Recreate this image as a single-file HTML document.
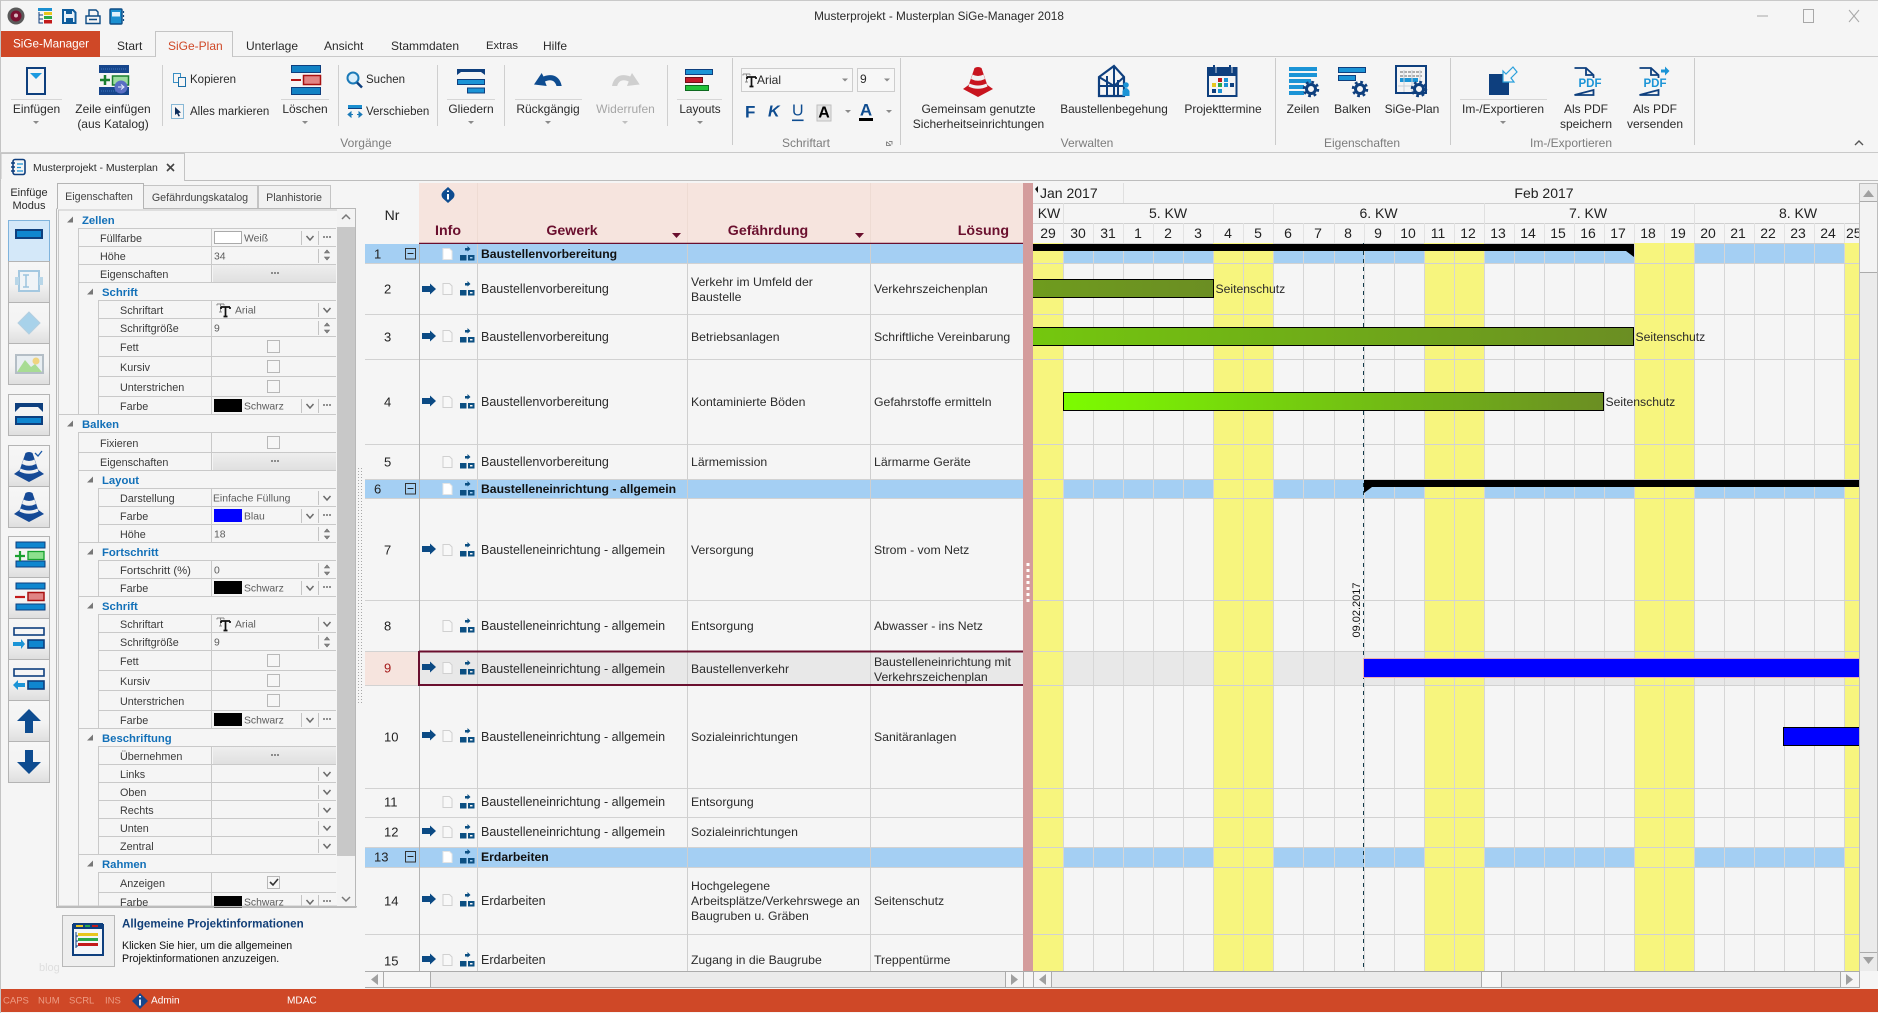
<!DOCTYPE html>
<html lang="de"><head><meta charset="utf-8"><title>Musterprojekt - Musterplan SiGe-Manager 2018</title>
<style>
html,body{margin:0;padding:0;background:#f5f5f5;width:1878px;height:1013px;overflow:hidden}
svg{display:block;position:absolute;left:0;top:0}
text{font-family:"Liberation Sans",sans-serif;font-size:12px;fill:#2a2a2a;dominant-baseline:central}
.c{text-anchor:middle}
.gl{fill:#7c7c7c}
.tb{font-size:12.25px;fill:#2b2b2b}
.t2{font-size:12.5px;fill:#2b2b2b}
.gb{font-size:12.2px;font-weight:bold;fill:#111}
.nr{font-size:13px;fill:#222}
.hd{font-size:14.2px;font-weight:bold;fill:#6a0f2e}
.gh{font-size:14px;fill:#222}
.pg{font-size:10.8px;fill:#3a3a3a;transform:translateY(1px)}
.cat{font-size:11.3px;font-weight:bold;fill:#1270b8;transform:translateY(1px)}
.sx{font-size:10.4px;fill:#5c5c5c;transform:translateY(1px)}
.tl{font-size:10.7px;fill:#444}
.rs{font-size:11.5px}
.st{font-size:9.5px;fill:#ec9c84}
.sw{font-size:10.1px;fill:#fff}
</style></head><body>
<svg width="1878" height="1013" viewBox="0 0 1878 1013" xmlns="http://www.w3.org/2000/svg">
<defs>
<linearGradient id="g2"><stop offset="0" stop-color="#6f9c1e"/><stop offset="1" stop-color="#6b8e23"/></linearGradient>
<linearGradient id="g3"><stop offset="0" stop-color="#74c80e"/><stop offset="1" stop-color="#6b8e23"/></linearGradient>
<linearGradient id="g4"><stop offset="0" stop-color="#7cfc00"/><stop offset="1" stop-color="#6b8e23"/></linearGradient>
<linearGradient id="bt" x1="0" y1="0" x2="0" y2="1"><stop offset="0" stop-color="#f6f6f6"/><stop offset=".55" stop-color="#f3f3f3"/><stop offset="1" stop-color="#dedede"/></linearGradient>
<linearGradient id="bb" x1="0" y1="0" x2="0" y2="1"><stop offset="0" stop-color="#eeeeee"/><stop offset="1" stop-color="#e0e0e0"/></linearGradient>
<g id="arr"><path d="M0-3H8V-5.500L14 0 8 5.500V3H0Z" fill="#0b4a84"/></g>
<g id="doc"><path d="M.5-5.500H7L9.500-3V5.500H.5Z" fill="#f8f8f8" stroke="#d0d0d0"/></g>
<g id="docw"><path d="M.5-5.500H7L9.500-3V5.500H.5Z" fill="#fff" stroke="#e4e4e4"/></g>
<g id="hier"><path d="M5-6H7.500V-8L10.500-5 7.500-2.500V-3.500H5Z" fill="#0b4f82"/><rect x="0" y="1" width="6.500" height="5.500" fill="#0b4f82"/><path d="M8 1h6.500v5.500H8zM10 3v1.500h2.500V3z" fill="#0b4f82" fill-rule="evenodd"/></g>
<g id="col"><rect x=".5" y="-5.500" width="10" height="10.500" fill="none" stroke="#333"/><path d="M2.500-.5h6" stroke="#222"/></g>
<g id="chev"><path d="M-3.500-2 0 2 3.500-2" fill="none" stroke="#6a6a6a" stroke-width="1.500"/></g>
<g id="spin"><path d="M-2.500-2 0-5 2.500-2ZM-2.500 2 0 5 2.500 2Z" fill="#8a8a8a" stroke="#666" stroke-width=".6"/></g>
<g id="dots"><path d="M-4 0h2M-1 0h2M2 0h2" stroke="#555" stroke-width="1.200"/></g>
<g id="cb"><rect x=".5" y=".5" width="12" height="12" fill="#f6f6f6" stroke="#b8b8b8"/></g>
<g id="dd"><path d="M-3 0h6L0 3Z" fill="#8a8a8a"/></g>
<g id="gear"><circle r="7" fill="none" stroke="#0e3f7e" stroke-width="2.500" stroke-dasharray="2.750 2.750"/><circle r="4.500" fill="#f5f5f5" stroke="#0e3f7e" stroke-width="3"/></g>
<g id="cone"><path d="M-15 22 0 30 15 22 8 17H-8Z"/><path d="M-3.500 1Q0-1 3.500 1L10 20Q0 25-10 20Z"/><path d="M-5.500 7.500Q0 10.500 5.500 7.500L7 12Q0 15.500-7 12Z" fill="#f1f1f1"/><path d="M-8.500 16.500Q0 20.500 8.500 16.500L9.500 19.500Q0 24-9.500 19.500Z" fill="#f1f1f1"/></g>
<g id="tt"><path d="M0 1h7M0 1v1.500M7 1v1.500M3.500 1v8M2 9h3" stroke="#888" fill="none"/><path d="M4 4h9M4 4v2M13 4v2M8.500 4v9M6.500 13.500h4" stroke="#111" stroke-width="1.700" fill="none"/></g>
</defs>

<!-- page -->
<rect width="1878" height="1013" fill="#f5f5f5"/>
<path d="M0 .5H1878" stroke="#c9c9c9"/><path d="M.5 0V1013" stroke="#c4c4c4"/>

<!-- quick access -->
<circle cx="16" cy="16" r="8.500" fill="#5a5a5a"/><circle cx="16" cy="16" r="5.500" fill="#7a1030"/><circle cx="16" cy="15.500" r="2" fill="#d8b8c0"/>
<rect x="38" y="8" width="14" height="3" fill="#1b8fd0"/><rect x="44" y="12" width="8" height="3" fill="#e8c61e"/><rect x="44" y="16" width="8" height="3" fill="#2aa84a"/><rect x="44" y="20" width="8" height="3.500" fill="#c21a1a"/><path d="M39 12v11h4M39 15h4M39 19h4" stroke="#0e3f7e" fill="none"/>
<path d="M63 10H73L75.500 12.500V23H63Z" fill="#e7f2fa" stroke="#0e5c9c" stroke-width="2"/><rect x="66" y="10" width="6" height="4" fill="#0e5c9c"/><rect x="66" y="18" width="7" height="5" fill="#0e5c9c"/>
<path d="M89 16V10H96L98 12V16M86 16H100V23.500H86ZM89 19.500H97" fill="none" stroke="#0e4c84" stroke-width="1.400"/>
<rect x="110" y="9" width="12" height="15" rx="1" fill="#1b8fd0" stroke="#0e4c84" stroke-width="1.400"/><rect x="112" y="12" width="8" height="4.500" fill="#dff0fb"/><path d="M123.500 11v2M123.500 15v2M123.500 19v2" stroke="#0e4c84" stroke-width="1.200"/>
<text x="939" y="16" class="c" style="font-size:11.8px">Musterprojekt - Musterplan SiGe-Manager 2018</text>
<path d="M1757 16h11" stroke="#a8a8a8"/><rect x="1803.500" y="9.500" width="10" height="13" fill="none" stroke="#a8a8a8"/><path d="M1849 10l10 12M1859 10l-10 12" stroke="#a8a8a8"/>

<!-- tabs -->
<path d="M0 56.500H1878" stroke="#c9c9c9"/>
<rect x="1" y="31" width="99" height="26" fill="#cf4827"/>
<text x="13" y="44" style="fill:#fff;font-size:11.7px">SiGe-Manager</text>
<path d="M155.500 57V31.500H232.500V57" fill="#f5f5f5" stroke="#c4c4c4"/><rect x="156" y="55" width="76" height="3" fill="#f5f5f5"/>
<text x="117" y="46">Start</text><text x="168" y="46" style="fill:#cf4827">SiGe-Plan</text><text x="246" y="46">Unterlage</text><text x="324" y="46">Ansicht</text><text x="391" y="46">Stammdaten</text><text x="486" y="46" style="font-size:11.3px">Extras</text><text x="543" y="46">Hilfe</text>

<!-- ribbon separators -->
<path d="M162.500 65V126M338.500 65V126M437.500 65V126M504.500 65V126M667.500 65V126" stroke="#cfcfcf"/>
<path d="M732.500 58V145M1275.500 58V145M1450.500 58V145M1694.500 58V145M900.500 58V145" stroke="#cbcbcb"/>
<path d="M11 99.500H62M281 99.500H329M447 99.500H495M515 99.500H582M677 99.500H722M1460 99.500H1547" stroke="#d6d6d6"/>
<path d="M0 152.500H1878" stroke="#c9c9c9"/>

<!-- ribbon icons -->
<rect x="27" y="68" width="18" height="26" fill="#f5f5f5" stroke="#0e3f7e" stroke-width="2"/><path d="M30 73H42L36 79Z" fill="#1b9ae0"/>
<rect x="99" y="65" width="30" height="8" fill="#17468c"/><path d="M101 69h26" stroke="#3f78bf" stroke-dasharray="1 1"/><rect x="99" y="87" width="30" height="8" fill="#17468c"/><path d="M101 91h26" stroke="#3f78bf" stroke-dasharray="1 1"/><path d="M100 80h10M105 75v10" stroke="#1a7e2e" stroke-width="2.500"/><rect x="112.500" y="76" width="16" height="9" fill="#9bdc9e" stroke="#1a7e2e" stroke-width="1.500"/><circle cx="121" cy="87" r="6.500" fill="#5a6fc4"/><path d="M118 87h5M121 84.500l3 2.500-3 2.500" stroke="#e8eefc" fill="none"/>
<rect x="173.500" y="73.500" width="7" height="9" fill="#f5f5f5" stroke="#3a8fc4"/><rect x="178.500" y="77.500" width="7" height="9" fill="#f5f5f5" stroke="#1b6fa8"/>
<rect x="171.500" y="104.500" width="12" height="14" fill="none" stroke="#1b7ab8" stroke-dasharray="1 1"/><path d="M175 107l6 5.500-2.500.5 1.500 3-1.500.5-1.500-3-2 1.500Z" fill="#0e2e5c"/>
<rect x="291.500" y="65.500" width="29" height="7" fill="#1282c4" stroke="#0e3f7e"/><rect x="291.500" y="87.500" width="29" height="7" fill="#1282c4" stroke="#0e3f7e"/><path d="M291 80h10" stroke="#b01515" stroke-width="2"/><rect x="303.500" y="75.500" width="17" height="9" fill="#e08484" stroke="#a81010" stroke-width="1.500"/>
<circle cx="353" cy="78" r="5.500" fill="#d9eefb" stroke="#1b7ab8" stroke-width="2"/><path d="M357 82.500l5 5" stroke="#0e3f7e" stroke-width="2.500"/>
<rect x="348" y="105" width="14" height="3" fill="#1b8fd0"/><path d="M348 108.500h14" stroke="#0e3f7e"/><path d="M348 114.500l3-2.500v5ZM362 114.500l-3-2.500v5ZM351 114.500h2M357 114.500h2" fill="#1b7ab8" stroke="#1b7ab8"/>
<path d="M457 69H485V75L481 72H461L457 75Z" fill="#0e3f7e"/><rect x="457.500" y="79.500" width="27" height="5" fill="#1b94d6" stroke="#0e3f7e"/><rect x="467.500" y="88" width="17" height="5" fill="#1b94d6" stroke="#0e3f7e"/>
<path d="M541.700 73L534 84.500 546.700 86 545 81.500C550 79 555 80 556.500 86H561.700C560 76 552 73 543.500 76.500Z" fill="#0e4c90"/>
<path d="M541.700 73L534 84.500 546.700 86 545 81.500C550 79 555 80 556.500 86H561.700C560 76 552 73 543.500 76.500Z" fill="#cfcfcf" transform="matrix(-1 0 0 1 1173.700 0)"/>
<rect x="685.500" y="69.500" width="27" height="5" fill="#1b94d6" stroke="#0e3f7e"/><rect x="685.500" y="77.500" width="17" height="5" fill="#c21a2a" stroke="#70101a"/><rect x="685.500" y="85.500" width="23" height="5" fill="#22c23a" stroke="#0e6a20"/>
<g fill="#c8141e"><use href="#cone" x="978" y="67"/></g>
<!-- house -->
<path d="M1114 66L1124 77V96H1099V77Z" fill="#f5f5f5" stroke="#0e3f7e" stroke-width="2.200"/><path d="M1099 77L1114 86 1124 77M1114 66V96M1107 76V96M1118 80V96M1099 86H1124" fill="none" stroke="#0e3f7e" stroke-width="2"/>
<circle cx="1126" cy="85" r="2.800" fill="#1b94d6"/><path d="M1122.500 96V91Q1126 85 1129.500 91V96Z" fill="#1b94d6"/>
<!-- calendar -->
<rect x="1208" y="68" width="28.500" height="28" fill="#f5f5f5" stroke="#0e3f7e" stroke-width="2"/><rect x="1208" y="68" width="28.500" height="8" fill="#0e3f7e"/><path d="M1214 65v8M1230 65v8" stroke="#0e3f7e" stroke-width="2"/><path d="M1216 65v8M1232 65v8" stroke="#f5f5f5" stroke-width=".8"/>
<rect x="1218" y="78" width="4" height="4" fill="#c21a1a"/><rect x="1224" y="78" width="4" height="4" fill="#1b94d6"/><rect x="1212" y="83" width="4" height="4" fill="#e8c61e"/><rect x="1218" y="83" width="4" height="4" fill="#2aa84a"/><rect x="1224" y="83" width="4" height="4" fill="#1b94d6"/><rect x="1230" y="83" width="4" height="4" fill="#0e3f7e"/><rect x="1212" y="89" width="4" height="4" fill="#0e3f7e"/><rect x="1218" y="89" width="4" height="4" fill="#1b94d6"/>
<!-- zeilen -->
<g fill="#1b94d6"><rect x="1289" y="67" width="28" height="4"/><rect x="1289" y="73" width="28" height="4"/><rect x="1289" y="79" width="22" height="4"/><rect x="1289" y="85" width="15" height="4"/><rect x="1289" y="91" width="15" height="4"/></g><use href="#gear" x="1311" y="89"/>
<rect x="1338.500" y="67.500" width="27" height="5" fill="#1b94d6" stroke="#0e3f7e"/><rect x="1338.500" y="75.500" width="17" height="5" fill="#1b94d6" stroke="#0e3f7e"/><use href="#gear" x="1360" y="89"/>
<rect x="1396" y="66" width="30" height="27" fill="#f5f5f5" stroke="#0e3f7e" stroke-width="2"/><path d="M1400 72H1422M1400 76H1422" stroke="#666" stroke-dasharray="3 1"/><rect x="1400" y="78" width="18" height="4" fill="#1b94d6"/><path d="M1404 70V92M1412 70V92M1420 70V92M1398 86H1424" stroke="#c8d0d8"/><use href="#gear" x="1419" y="89"/>
<!-- import -->
<rect x="1489" y="74" width="20" height="21" fill="#0e3f7e"/><path d="M1511 78L1517 72 1513 67 1506 74 1503 71V82H1514Z" fill="#f5f5f5" stroke="#2aa0dc" stroke-width="1.200"/>
<path d="M1574.500 68H1586L1593.500 75V78M1593.500 90V95H1574.500Z" fill="none" stroke="#0e3f7e" stroke-width="1.800"/><path d="M1586 68V75H1593.500" fill="none" stroke="#0e3f7e" stroke-width="1.800"/>
<text x="1590" y="84" class="c" style="font-weight:bold;font-size:11.500px;fill:#1b94d6">PDF</text>
<path d="M1639.500 68H1651L1658.500 75V78M1658.500 90V95H1639.500Z" fill="none" stroke="#0e3f7e" stroke-width="1.800"/><path d="M1651 68V75H1658.500" fill="none" stroke="#0e3f7e" stroke-width="1.800"/><path d="M1661 69.500h4v-3l4.500 4.500-4.500 4.500v-3h-4Z" fill="#1b94d6"/>
<text x="1655" y="84" class="c" style="font-weight:bold;font-size:11.500px;fill:#1b94d6">PDF</text>

<!-- combos -->
<rect x="741.500" y="68.500" width="111" height="23" fill="#f7f7f7" stroke="#cdcdcd"/><rect x="857.500" y="68.500" width="37" height="23" fill="#f7f7f7" stroke="#cdcdcd"/>
<use href="#tt" x="743" y="73"/><text x="757" y="80">Arial</text><text x="860" y="79">9</text>
<use href="#dd" x="845" y="78.500"/><use href="#dd" x="887" y="78.500"/>
<text x="745" y="112" style="font-weight:bold;font-size:17px;fill:#0e4c90">F</text><text x="768" y="112" style="font-style:italic;font-weight:bold;font-size:16px;fill:#0e4c90">K</text><text x="792" y="111" style="font-size:16px;fill:#0e4c90;text-decoration:underline">U</text>
<rect x="817" y="105" width="14" height="16" fill="#e4e4e4" stroke="#c0c0c0"/><text x="824" y="113" class="c" style="font-weight:bold;font-size:16px;fill:#000">A</text>
<text x="866" y="110" class="c" style="font-weight:bold;font-size:17px;fill:#0e4c90">A</text><rect x="859" y="118" width="14" height="3" fill="#000"/>
<use href="#dd" x="848" y="110"/><use href="#dd" x="889" y="110"/>
<path d="M886.500 141.500v4h4M887 142l4 3.500M889 141.500h3v3" stroke="#888" fill="none"/>

<!-- ribbon labels -->
<text x="36.500" y="109" class="c">Einfügen</text><use href="#dd" x="36" y="121"/>
<text x="113" y="109" class="c">Zeile einfügen</text><text x="113" y="124" class="c">(aus Katalog)</text>
<text x="190" y="80" class="rs">Kopieren</text><text x="190" y="112" class="rs">Alles markieren</text>
<text x="305" y="109" class="c">Löschen</text><use href="#dd" x="305" y="121"/>
<text x="366" y="80" class="rs">Suchen</text><text x="366" y="112" class="rs">Verschieben</text>
<text x="471" y="109" class="c">Gliedern</text><use href="#dd" x="471" y="121"/>
<text x="548" y="109" class="c">Rückgängig</text><use href="#dd" x="548" y="121"/>
<text x="625.500" y="109" class="c" style="fill:#a6a6a6">Widerrufen</text><g opacity=".5"><use href="#dd" x="625" y="121"/></g>
<text x="700" y="109" class="c" style="font-size:11.800px">Layouts</text><use href="#dd" x="700" y="121"/>
<text x="978.500" y="109" class="c">Gemeinsam genutzte</text><text x="978.500" y="124" class="c">Sicherheitseinrichtungen</text>
<text x="1114" y="109" class="c" style="font-size:11.800px">Baustellenbegehung</text><text x="1223" y="109" class="c">Projekttermine</text>
<text x="1303" y="109" class="c">Zeilen</text><text x="1352.500" y="109" class="c">Balken</text><text x="1412" y="109" class="c">SiGe-Plan</text>
<text x="1503" y="109" class="c">Im-/Exportieren</text><use href="#dd" x="1503" y="121"/>
<text x="1586" y="109" class="c">Als PDF</text><text x="1586" y="124" class="c">speichern</text>
<text x="1655" y="109" class="c">Als PDF</text><text x="1655" y="124" class="c">versenden</text>
<text x="366" y="143" class="c gl">Vorgänge</text><text x="806" y="143" class="c gl">Schriftart</text><text x="1087" y="143" class="c gl">Verwalten</text><text x="1362" y="143" class="c gl">Eigenschaften</text><text x="1571" y="143" class="c gl">Im-/Exportieren</text>
<path d="M1855 145l4-4 4 4" fill="none" stroke="#555" stroke-width="1.400"/>

<!-- document tab -->
<path d="M0 180.500H1878" stroke="#bdbdbd"/>
<path d="M1 181V153.500H184.500V181" fill="#f5f5f5" stroke="#c4c4c4"/><rect x="1" y="179" width="183" height="3" fill="#f5f5f5"/>
<rect x="13" y="159.500" width="12" height="15" rx="2" fill="#f5f5f5" stroke="#0e3f7e" stroke-width="1.600"/><path d="M11 163h4M11 167h4M11 171h4" stroke="#0e3f7e" stroke-width="1.400"/><path d="M17 164h6M17 167.500h4M17 171h6" stroke="#1b94d6" stroke-width="1.300"/>
<text x="33" y="168" style="font-size:10.500px">Musterprojekt - Musterplan</text>
<path d="M167 164l7 7M174 164l-7 7" stroke="#444" stroke-width="1.600"/>

<!-- left strip -->
<text x="29" y="193" class="c" style="font-size:11px">Einfüge</text><text x="29" y="206" class="c" style="font-size:11px">Modus</text>
<rect x="8.500" y="220.500" width="41" height="41" fill="#d4e8f9" stroke="#7fb3dc"/>
<g fill="url(#bt)" stroke="#b4b4b4"><rect x="8.500" y="261.500" width="41" height="41"/><rect x="8.500" y="302.500" width="41" height="41"/><rect x="8.500" y="343.500" width="41" height="41"/><rect x="8.500" y="394.500" width="41" height="41"/><rect x="8.500" y="445.500" width="41" height="41"/><rect x="8.500" y="486.500" width="41" height="41"/><rect x="8.500" y="536.500" width="41" height="41"/><rect x="8.500" y="577.500" width="41" height="41"/><rect x="8.500" y="618.500" width="41" height="41"/><rect x="8.500" y="659.500" width="41" height="41"/><rect x="8.500" y="700.500" width="41" height="41"/><rect x="8.500" y="741.500" width="41" height="41"/></g>
<rect x="16" y="230" width="26" height="8" fill="#0f86cf" stroke="#0e3f7e" stroke-width="2"/>
<rect x="19" y="271" width="20" height="20" fill="#f0f4f7" stroke="#a4c8e0" stroke-width="2"/><rect x="15" y="277" width="4" height="8" fill="#b8d6e8"/><rect x="39" y="277" width="4" height="8" fill="#b8d6e8"/><path d="M26 275v12M23 275h6M23 287h6" stroke="#9cc4de" stroke-width="1.500" fill="none"/>
<path d="M29 312L40 323 29 334 18 323Z" fill="#a8d2ea" stroke="#b4cfe0"/>
<rect x="16" y="355" width="27" height="18" fill="#e8eef2" stroke="#b4bec6" stroke-width="2"/><path d="M17 372L25 360 31 367 35 364 42 372Z" fill="#a8dc94"/><circle cx="36" cy="361" r="3.500" fill="#f0d480"/>
<path d="M15 403H43V412L38 407H20L15 412Z" fill="#0e3f7e"/><rect x="16" y="417" width="26" height="7" fill="#0f86cf" stroke="#0e3f7e" stroke-width="2"/>
<g fill="#164a96"><use href="#cone" x="29" y="452"/><use href="#cone" x="29" y="492"/></g><path d="M35 453l3 3 4-5" fill="none" stroke="#1c5aa8" stroke-width="1.300"/>
<rect x="16" y="542" width="29" height="6" fill="#0f86cf" stroke="#0e3f7e"/><rect x="16" y="561" width="29" height="6" fill="#0f86cf" stroke="#0e3f7e"/><path d="M15 556h10M20 551v10" stroke="#1aa030" stroke-width="2.200"/><rect x="28" y="551.500" width="16" height="8" fill="#8ce08e" stroke="#16a030" stroke-width="1.300"/>
<rect x="16" y="583" width="29" height="6" fill="#0f86cf" stroke="#0e3f7e"/><rect x="16" y="604" width="29" height="6" fill="#0f86cf" stroke="#0e3f7e"/><path d="M15 597h10" stroke="#c21a1a" stroke-width="2.200"/><rect x="28" y="592.500" width="16" height="8" fill="#e08484" stroke="#a81010" stroke-width="1.500"/>
<rect x="14" y="628" width="30" height="7" fill="#f5f5f5" stroke="#0e3f7e" stroke-width="1.600"/><rect x="28" y="640" width="16" height="8" fill="#0f86cf" stroke="#0e3f7e" stroke-width="1.600"/><path d="M13 642h8v-3l4 5-4 5v-3h-8Z" fill="#1b94d6"/>
<rect x="14" y="669" width="30" height="7" fill="#f5f5f5" stroke="#0e3f7e" stroke-width="1.600"/><rect x="28" y="681" width="16" height="8" fill="#0f86cf" stroke="#0e3f7e" stroke-width="1.600"/><path d="M25 683h-7v-3l-5 5 5 5v-3h7Z" fill="#1b94d6"/>
<path d="M29 709L41 721H33V733H25V721H17Z" fill="#0e4c90"/>
<path d="M29 774L41 762H33V750H25V762H17Z" fill="#0e4c90"/>

<!-- property tabs -->
<path d="M143.500 208V185.500H257.500V208M258.500 208V185.500H330.500V208" fill="#f1f1f1" stroke="#c4c4c4"/>
<path d="M57.500 209V183.500H143.500V209" fill="#f5f5f5" stroke="#b4b4b4"/>
<text x="99" y="197" class="c tl">Eigenschaften</text><text x="200" y="198" class="c tl">Gefährdungskatalog</text><text x="294" y="198" class="c tl">Planhistorie</text>
<path d="M57 208.500H58M143 208.500H355.500V907.500H56.500V208.500" fill="none" stroke="#b8b8b8"/>
<rect x="58.500" y="210" width="296" height="696" fill="#f5f5f5" stroke="#c8c8c8"/>

<!-- grid -->
<path d="M78 228.500H336M78 246.500H336M78 264.500H336M78 282.500H336M98 300.500H336M98 318.500H336M98 336.500H336M98 356.500H336M98 376.500H336M98 396.500H336M58 414.500H336M78 432.500H336M78 452.500H336M78 470.500H336M98 488.500H336M98 506.500H336M98 524.500H336M78 542.500H336M98 560.500H336M98 578.500H336M78 596.500H336M98 614.500H336M98 632.500H336M98 650.500H336M98 670.500H336M98 690.500H336M98 710.500H336M78 728.500H336M98 746.500H336M98 764.500H336M98 782.500H336M98 800.500H336M98 818.500H336M98 836.500H336M78 854.500H336M98 872.500H336M98 892.500H336" stroke="#c9c9c9" fill="none"/>
<path d="M78.500 228V414M78.500 432V906M98.500 300V414M98.500 488V542M98.500 560V596M98.500 614V728M98.500 746V854M98.500 872V906M211.500 228V282M211.500 300V414M211.500 432V470M211.500 488V542M211.500 560V596M211.500 614V728M211.500 746V854M211.500 872V906" stroke="#c9c9c9" fill="none"/>
<path d="M73 216.500V222.500H67ZM93 288.500V294.500H87ZM73 420.500V426.500H67ZM93 476.500V482.500H87ZM93 548.500V554.500H87ZM93 602.500V608.500H87ZM93 734.500V740.500H87ZM93 860.500V866.500H87Z" fill="#777"/>
<text x="82" y="220" class="cat">Zellen</text><text x="102" y="292" class="cat">Schrift</text><text x="82" y="424" class="cat">Balken</text><text x="102" y="480" class="cat">Layout</text><text x="102" y="552" class="cat">Fortschritt</text><text x="102" y="606" class="cat">Schrift</text><text x="102" y="738" class="cat">Beschriftung</text><text x="102" y="864" class="cat">Rahmen</text>
<text x="100" y="238" class="pg">Füllfarbe</text><text x="100" y="256" class="pg">Höhe</text><text x="100" y="274" class="pg">Eigenschaften</text>
<text x="120" y="310" class="pg">Schriftart</text><text x="120" y="328" class="pg">Schriftgröße</text><text x="120" y="347" class="pg">Fett</text><text x="120" y="367" class="pg">Kursiv</text><text x="120" y="387" class="pg">Unterstrichen</text><text x="120" y="406" class="pg">Farbe</text>
<text x="100" y="443" class="pg">Fixieren</text><text x="100" y="462" class="pg">Eigenschaften</text>
<text x="120" y="498" class="pg">Darstellung</text><text x="120" y="516" class="pg">Farbe</text><text x="120" y="534" class="pg">Höhe</text>
<text x="120" y="570" class="pg" style="font-size:11.300px">Fortschritt (%)</text><text x="120" y="588" class="pg">Farbe</text>
<text x="120" y="624" class="pg">Schriftart</text><text x="120" y="642" class="pg">Schriftgröße</text><text x="120" y="661" class="pg">Fett</text><text x="120" y="681" class="pg">Kursiv</text><text x="120" y="701" class="pg">Unterstrichen</text><text x="120" y="720" class="pg">Farbe</text>
<text x="120" y="756" class="pg">Übernehmen</text><text x="120" y="774" class="pg">Links</text><text x="120" y="792" class="pg">Oben</text><text x="120" y="810" class="pg">Rechts</text><text x="120" y="828" class="pg">Unten</text><text x="120" y="846" class="pg">Zentral</text>
<text x="120" y="883" class="pg">Anzeigen</text><text x="120" y="902" class="pg">Farbe</text>
<!-- values -->
<rect x="214.500" y="231.500" width="27" height="12" fill="#fff" stroke="#aaa"/><text x="244" y="238" class="sx">Weiß</text>
<text x="214" y="256" class="sx">34</text>
<rect x="213" y="265" width="123" height="17" fill="url(#bb)"/><use href="#dots" x="275" y="273"/>
<use href="#tt" x="217" y="303"/><text x="235" y="310" class="sx">Arial</text><text x="214" y="328" class="sx">9</text>
<use href="#cb" x="267" y="340"/><use href="#cb" x="267" y="360"/><use href="#cb" x="267" y="380"/>
<rect x="214" y="399" width="28" height="13" fill="#000"/><text x="244" y="406" class="sx">Schwarz</text>
<use href="#cb" x="267" y="436"/>
<rect x="213" y="453" width="123" height="17" fill="url(#bb)"/><use href="#dots" x="275" y="461"/>
<text x="213" y="498" class="sx">Einfache Füllung</text>
<rect x="214" y="509" width="28" height="13" fill="#0000ff"/><text x="244" y="516" class="sx">Blau</text><text x="214" y="534" class="sx">18</text>
<text x="214" y="570" class="sx">0</text><rect x="214" y="581" width="28" height="13" fill="#000"/><text x="244" y="588" class="sx">Schwarz</text>
<use href="#tt" x="217" y="617"/><text x="235" y="624" class="sx">Arial</text><text x="214" y="642" class="sx">9</text>
<use href="#cb" x="267" y="654"/><use href="#cb" x="267" y="674"/><use href="#cb" x="267" y="694"/>
<rect x="214" y="713" width="28" height="13" fill="#000"/><text x="244" y="720" class="sx">Schwarz</text>
<rect x="213" y="747" width="123" height="17" fill="url(#bb)"/><use href="#dots" x="275" y="755"/>
<use href="#cb" x="267" y="876"/><path d="M270 882l3 3 5-6" fill="none" stroke="#333" stroke-width="1.600"/>
<rect x="214" y="896" width="28" height="13" fill="#000"/><text x="244" y="902" class="sx">Schwarz</text>
<!-- dropdown separators -->
<path d="M301.500 231v14M318.500 231v14M318.500 249v14M318.500 303v14M318.500 321v14M301.500 399v14M318.500 399v14M318.500 491v14M301.500 509v14M318.500 509v14M318.500 527v14M318.500 563v14M301.500 581v14M318.500 581v14M318.500 617v14M318.500 635v14M301.500 713v14M318.500 713v14M318.500 767v14M318.500 785v14M318.500 803v14M318.500 821v14M318.500 839v14M301.500 895v11M318.500 895v11" stroke="#c4c4c4"/>
<use href="#chev" x="310" y="238"/><use href="#dots" x="327" y="237"/><use href="#spin" x="327" y="255"/>
<use href="#chev" x="327" y="310"/><use href="#spin" x="327" y="328"/>
<use href="#chev" x="310" y="406"/><use href="#dots" x="327" y="405"/>
<use href="#chev" x="327" y="498"/><use href="#chev" x="310" y="516"/><use href="#dots" x="327" y="515"/><use href="#spin" x="327" y="534"/>
<use href="#spin" x="327" y="570"/><use href="#chev" x="310" y="588"/><use href="#dots" x="327" y="587"/>
<use href="#chev" x="327" y="624"/><use href="#spin" x="327" y="642"/>
<use href="#chev" x="310" y="720"/><use href="#dots" x="327" y="719"/>
<use href="#chev" x="327" y="774"/><use href="#chev" x="327" y="792"/><use href="#chev" x="327" y="810"/><use href="#chev" x="327" y="828"/><use href="#chev" x="327" y="846"/>
<use href="#chev" x="310" y="902"/><use href="#dots" x="327" y="901"/>
<!-- panel scrollbar -->
<rect x="337" y="209" width="18" height="697" fill="#f3f3f3"/><rect x="337" y="227" width="18" height="629" fill="#c8c8c8"/>
<path d="M342 219l4-4 4 4" fill="none" stroke="#777" stroke-width="1.500"/><path d="M342 897l4 4 4-4" fill="none" stroke="#777" stroke-width="1.500"/>
<rect x="56" y="906" width="301" height="1.500" fill="#bcbcbc"/><rect x="56" y="908" width="301" height="6" fill="#f5f5f5"/>

<!-- info panel -->
<rect x="62.500" y="915.500" width="52" height="51" fill="#eeeeee" stroke="#b8b8b8"/>
<rect x="73" y="925" width="30" height="30" fill="#f3f6f9" stroke="#0e3f7e" stroke-width="2"/><rect x="73" y="923" width="30" height="6" fill="#0e3f7e"/><rect x="76" y="925" width="7" height="2" fill="#e8c61e"/><rect x="85" y="925" width="5" height="2" fill="#2aa84a"/><rect x="92" y="925" width="6" height="2" fill="#c21a1a"/>
<rect x="78" y="933" width="20" height="3" fill="#e8c61e"/><rect x="78" y="938" width="20" height="3" fill="#2aa84a"/><rect x="78" y="943" width="20" height="3" fill="#c21a1a"/><path d="M76 932v16M76 936h2M76 941h2M76 946h2" stroke="#0e3f7e"/>
<text x="122" y="924" style="font-weight:bold;font-size:11.600px;fill:#123f78">Allgemeine Projektinformationen</text>
<text x="122" y="946" style="font-size:10.600px;fill:#111">Klicken Sie hier, um die allgemeinen</text>
<text x="122" y="959" style="font-size:10.600px;fill:#111">Projektinformationen anzuzeigen.</text>
<text x="39" y="968" style="font-size:11px;fill:#dedede">blog</text>

<!-- splitter dots left -->
<path d="M358.500 468V703M361.500 468V703" stroke="#a8a8a8" stroke-dasharray="1 2"/>

<!-- table header -->
<rect x="419" y="183" width="604" height="60" fill="#f6e4de"/>
<path d="M477.500 183V243M687.500 183V243M870.500 183V243" stroke="#eedbd3"/>
<path d="M419 243.500H1023" stroke="#6a0f2e" stroke-width="1.500"/>
<text x="392" y="215" class="c gh">Nr</text>
<path d="M448 187L453 191.500Q456 195 453 198.500L448 203 443 198.500Q440 195 443 191.500Z" fill="#0e4c90"/><path d="M448 190.500v1.500M448 194v5.500" stroke="#fff" stroke-width="2"/>
<text x="448" y="231" class="c hd">Info</text><text x="572" y="231" class="c hd">Gewerk</text><text x="768" y="231" class="c hd">Gefährdung</text><text x="1009" y="231" class="hd" style="text-anchor:end">Lösung</text>
<path d="M672 233H681L676.500 238ZM855 233H864L859.500 238Z" fill="#6a0f2e"/>

<!-- table rows backgrounds -->
<rect x="365" y="244" width="658" height="19" fill="#a4cff3"/><rect x="365" y="479" width="658" height="19" fill="#a4cff3"/><rect x="365" y="847" width="658" height="20" fill="#a4cff3"/>
<rect x="365" y="651" width="54" height="34" fill="#f6e4de"/><rect x="419" y="651" width="604" height="34" fill="#e8e8e8"/>
<path d="M365 263.500H1023M365 314.500H1023M365 359.500H1023M365 444.500H1023M365 479.500H1023M365 498.500H1023M365 600.500H1023M365 651.500H1023M365 685.500H1023M365 788.500H1023M365 817.500H1023M365 847.500H1023M365 867.500H1023M365 934.500H1023" stroke="#d2d2d2"/>
<path d="M419.500 244V971" stroke="#b4b4b4"/><path d="M477.500 244V971M687.500 244V971M870.500 244V971" stroke="#cfcfcf"/>
<path d="M419 651.500H1023M419 685H1023M419 651V686" fill="none" stroke="#6a0f2e" stroke-width="2"/>

<!-- row numbers -->
<text x="374" y="254" class="nr">1</text><text x="384" y="289" class="nr">2</text><text x="384" y="337" class="nr">3</text><text x="384" y="402" class="nr">4</text><text x="384" y="462" class="nr">5</text><text x="374" y="489" class="nr">6</text><text x="384" y="550" class="nr">7</text><text x="384" y="626" class="nr">8</text><text x="384" y="668" class="nr" style="fill:#a51a1a">9</text><text x="384" y="737" class="nr">10</text><text x="384" y="802" class="nr">11</text><text x="384" y="832" class="nr">12</text><text x="374" y="857" class="nr">13</text><text x="384" y="901" class="nr">14</text><text x="384" y="961" class="nr">15</text>
<use href="#col" x="405" y="254"/><use href="#col" x="405" y="489"/><use href="#col" x="405" y="857"/>
<!-- row icons -->
<use href="#arr" x="422" y="289"/><use href="#arr" x="422" y="336"/><use href="#arr" x="422" y="401"/><use href="#arr" x="422" y="549"/><use href="#arr" x="422" y="667"/><use href="#arr" x="422" y="735"/><use href="#arr" x="422" y="831"/><use href="#arr" x="422" y="899"/><use href="#arr" x="422" y="959"/>
<use href="#docw" x="442.500" y="254"/><use href="#doc" x="442.500" y="289"/><use href="#doc" x="442.500" y="336"/><use href="#doc" x="442.500" y="402"/><use href="#doc" x="442.500" y="462"/><use href="#docw" x="442.500" y="489"/><use href="#doc" x="442.500" y="550"/><use href="#doc" x="442.500" y="626"/><use href="#doc" x="442.500" y="668"/><use href="#doc" x="442.500" y="736"/><use href="#doc" x="442.500" y="802"/><use href="#doc" x="442.500" y="832"/><use href="#docw" x="442.500" y="857"/><use href="#doc" x="442.500" y="900"/><use href="#doc" x="442.500" y="960"/>
<use href="#hier" x="460" y="254"/><use href="#hier" x="460" y="289"/><use href="#hier" x="460" y="336"/><use href="#hier" x="460" y="402"/><use href="#hier" x="460" y="462"/><use href="#hier" x="460" y="489"/><use href="#hier" x="460" y="550"/><use href="#hier" x="460" y="626"/><use href="#hier" x="460" y="668"/><use href="#hier" x="460" y="736"/><use href="#hier" x="460" y="802"/><use href="#hier" x="460" y="832"/><use href="#hier" x="460" y="857"/><use href="#hier" x="460" y="900"/><use href="#hier" x="460" y="960"/>
<!-- row text -->
<text x="481" y="254" class="gb">Baustellenvorbereitung</text>
<text x="481" y="289" class="t2">Baustellenvorbereitung</text><text x="691" y="282" class="tb">Verkehr im Umfeld der</text><text x="691" y="297" class="tb">Baustelle</text><text x="874" y="289" class="tb">Verkehrszeichenplan</text>
<text x="481" y="337" class="t2">Baustellenvorbereitung</text><text x="691" y="337" class="tb">Betriebsanlagen</text><text x="874" y="337" class="tb">Schriftliche Vereinbarung</text>
<text x="481" y="402" class="t2">Baustellenvorbereitung</text><text x="691" y="402" class="tb">Kontaminierte Böden</text><text x="874" y="402" class="tb">Gefahrstoffe ermitteln</text>
<text x="481" y="462" class="t2">Baustellenvorbereitung</text><text x="691" y="462" class="tb">Lärmemission</text><text x="874" y="462" class="tb">Lärmarme Geräte</text>
<text x="481" y="489" class="gb">Baustelleneinrichtung - allgemein</text>
<text x="481" y="550" class="t2">Baustelleneinrichtung - allgemein</text><text x="691" y="550" class="tb">Versorgung</text><text x="874" y="550" class="tb">Strom - vom Netz</text>
<text x="481" y="626" class="t2">Baustelleneinrichtung - allgemein</text><text x="691" y="626" class="tb">Entsorgung</text><text x="874" y="626" class="tb">Abwasser - ins Netz</text>
<text x="481" y="669" class="t2">Baustelleneinrichtung - allgemein</text><text x="691" y="669" class="tb">Baustellenverkehr</text><text x="874" y="662" class="tb">Baustelleneinrichtung mit</text><text x="874" y="677" class="tb">Verkehrszeichenplan</text>
<text x="481" y="737" class="t2">Baustelleneinrichtung - allgemein</text><text x="691" y="737" class="tb">Sozialeinrichtungen</text><text x="874" y="737" class="tb">Sanitäranlagen</text>
<text x="481" y="802" class="t2">Baustelleneinrichtung - allgemein</text><text x="691" y="802" class="tb">Entsorgung</text>
<text x="481" y="832" class="t2">Baustelleneinrichtung - allgemein</text><text x="691" y="832" class="tb">Sozialeinrichtungen</text>
<text x="481" y="857" class="gb">Erdarbeiten</text>
<text x="481" y="901" class="t2">Erdarbeiten</text><text x="691" y="886" class="tb">Hochgelegene</text><text x="691" y="901" class="tb">Arbeitsplätze/Verkehrswege an</text><text x="691" y="916" class="tb">Baugruben u. Gräben</text><text x="874" y="901" class="tb">Seitenschutz</text>
<text x="481" y="960" class="t2">Erdarbeiten</text><text x="691" y="960" class="tb">Zugang in die Baugrube</text><text x="874" y="960" class="tb">Treppentürme</text>

<!-- gantt header -->
<path d="M1033 203.500H1859M1033 223.500H1859M1033 243.500H1859" stroke="#cfcfcf"/>
<path d="M1123.500 183V203M1063.500 203V223M1273.500 203V223M1484.500 203V223M1694.500 203V223" stroke="#e0e0e0"/>
<path d="M1063.500 223V243M1093.500 223V243M1123.500 223V243M1153.500 223V243M1183.500 223V243M1213.500 223V243M1243.500 223V243M1273.500 223V243M1303.500 223V243M1334.500 223V243M1364.500 223V243M1394.500 223V243M1424.500 223V243M1454.500 223V243M1484.500 223V243M1514.500 223V243M1544.500 223V243M1574.500 223V243M1604.500 223V243M1634.500 223V243M1664.500 223V243M1694.500 223V243M1724.500 223V243M1754.500 223V243M1784.500 223V243M1814.500 223V243M1844.500 223V243" stroke="#e2e2e2"/>
<path d="M1035 189l3-3v7Z" fill="#111"/>
<text x="1040" y="193" class="gh">Jan 2017</text><text x="1544" y="193" class="c gh">Feb 2017</text>
<text x="1049" y="213" class="c gh">KW</text><text x="1168" y="213" class="c gh">5. KW</text><text x="1378.500" y="213" class="c gh">6. KW</text><text x="1588" y="213" class="c gh">7. KW</text><text x="1798" y="213" class="c gh">8. KW</text>
<text x="1048" y="233" class="c gh">29</text><text x="1078" y="233" class="c gh">30</text><text x="1108" y="233" class="c gh">31</text><text x="1138" y="233" class="c gh">1</text><text x="1168" y="233" class="c gh">2</text><text x="1198" y="233" class="c gh">3</text><text x="1228" y="233" class="c gh">4</text><text x="1258" y="233" class="c gh">5</text><text x="1288" y="233" class="c gh">6</text><text x="1318" y="233" class="c gh">7</text><text x="1348" y="233" class="c gh">8</text><text x="1378" y="233" class="c gh">9</text><text x="1408" y="233" class="c gh">10</text><text x="1438" y="233" class="c gh">11</text><text x="1468" y="233" class="c gh">12</text><text x="1498" y="233" class="c gh">13</text><text x="1528" y="233" class="c gh">14</text><text x="1558" y="233" class="c gh">15</text><text x="1588" y="233" class="c gh">16</text><text x="1618" y="233" class="c gh">17</text><text x="1648" y="233" class="c gh">18</text><text x="1678" y="233" class="c gh">19</text><text x="1708" y="233" class="c gh">20</text><text x="1738" y="233" class="c gh">21</text><text x="1768" y="233" class="c gh">22</text><text x="1798" y="233" class="c gh">23</text><text x="1828" y="233" class="c gh">24</text><text x="1846" y="233" class="gh">25</text>

<!-- gantt body -->
<rect x="1063" y="651" width="796" height="34" fill="#e8e8e8"/>
<rect x="1033" y="244" width="811" height="19" fill="#a4cff3"/><rect x="1033" y="479" width="811" height="19" fill="#a4cff3"/><rect x="1033" y="847" width="811" height="20" fill="#a4cff3"/>
<g fill="#f7f57e"><rect x="1033" y="243" width="30" height="728"/><rect x="1213" y="243" width="60" height="728"/><rect x="1424" y="243" width="60" height="728"/><rect x="1634" y="243" width="60" height="728"/><rect x="1844" y="243" width="15" height="728"/></g>
<path d="M1063.500 244V971M1093.500 244V971M1123.500 244V971M1153.500 244V971M1183.500 244V971M1213.500 244V971M1243.500 244V971M1273.500 244V971M1303.500 244V971M1334.500 244V971M1364.500 244V971M1394.500 244V971M1424.500 244V971M1454.500 244V971M1484.500 244V971M1514.500 244V971M1544.500 244V971M1574.500 244V971M1604.500 244V971M1634.500 244V971M1664.500 244V971M1694.500 244V971M1724.500 244V971M1754.500 244V971M1784.500 244V971M1814.500 244V971M1844.500 244V971" stroke="#d6d6d6"/>
<path d="M1033 263.500H1859M1033 314.500H1859M1033 359.500H1859M1033 444.500H1859M1033 479.500H1859M1033 498.500H1859M1033 600.500H1859M1033 651.500H1859M1033 685.500H1859M1033 788.500H1859M1033 817.500H1859M1033 847.500H1859M1033 867.500H1859M1033 934.500H1859" stroke="#d2d2d2"/>
<path d="M1363.500 243V971" stroke="#123a4a" stroke-dasharray="4 4"/>
<text transform="translate(1357 610) rotate(-90)" class="c" style="font-size:11px;fill:#111">09.02.2017</text>
<!-- bars -->
<path d="M1033 244H1634V257L1626 251H1033Z" fill="#000"/>
<path d="M1364 480H1859V487H1372L1364 493Z" fill="#000"/>
<rect x="1026.500" y="279.500" width="187" height="18" fill="url(#g2)" stroke="#000"/>
<rect x="1026.500" y="327.500" width="607" height="18" fill="url(#g3)" stroke="#000"/>
<rect x="1063.500" y="392.500" width="540" height="18" fill="url(#g4)" stroke="#000"/>
<text x="1215.500" y="289" style="font-size:12.200px">Seitenschutz</text><text x="1635.500" y="337" style="font-size:12.200px">Seitenschutz</text><text x="1605.500" y="402" style="font-size:12.200px">Seitenschutz</text>
<rect x="1363.500" y="658.500" width="496" height="19" fill="#0000ff" stroke="#eeb0b0"/>
<rect x="1783.500" y="727.500" width="76" height="18" fill="#0000ff" stroke="#000"/>

<!-- splitter -->
<rect x="1023" y="183" width="10" height="788" fill="#d49c9c"/>
<path d="M1028 563V605" stroke="#fff" stroke-width="3" stroke-dasharray="3 3"/>

<!-- horizontal scrollbars -->
<rect x="365" y="971" width="668" height="17" fill="#f5f5f5"/>
<rect x="430" y="972" width="575" height="15" fill="#ebebeb"/><rect x="1051" y="972" width="789" height="15" fill="#ebebeb"/><rect x="1481" y="972" width="20" height="15" fill="#f7f7f7"/>
<path d="M365 971.500H1859M365 987.500H1859" stroke="#ababab"/>
<path d="M383.500 971V988M430.500 971V988M1005.500 971V988M1023.500 971V988M1051.500 971V988M1481.500 971V988M1501.500 971V988M1840.500 971V988M1033.500 971V988M1859.500 971V988" stroke="#ababab"/>
<path d="M378 974V985L371 979.500ZM1011 974V985L1018 979.500ZM1046 974V985L1039 979.500ZM1846 974V985L1853 979.500Z" fill="#a0a0a0"/>

<!-- vertical scrollbar -->
<rect x="1860" y="183" width="17" height="788" fill="#ebebeb"/>
<rect x="1860" y="201" width="17" height="71" fill="#f3f3f3"/>
<path d="M1860 201.500H1877M1860 272.500H1877M1860 952.500H1877" stroke="#ababab"/>
<path d="M1859.500 183V971M1877.500 183V971M1859 183.500H1878" stroke="#bdbdbd"/>
<path d="M1863 197H1874L1868.500 190ZM1863 957H1874L1868.500 964Z" fill="#a0a0a0"/>

<!-- status -->
<rect x="1" y="989" width="1877" height="23" fill="#cf4827"/>
<text x="3" y="1001" class="st">CAPS</text><text x="38" y="1001" class="st">NUM</text><text x="69" y="1001" class="st">SCRL</text><text x="105" y="1001" class="st">INS</text>
<path d="M140 993L148 1001 140 1009 132 1001Z" fill="#17468c"/><path d="M140 996v1.500M140 999.500v6" stroke="#fff" stroke-width="1.800"/>
<text x="151" y="1001" class="sw">Admin</text><text x="287" y="1001" class="sw">MDAC</text>
</svg>
</body></html>
